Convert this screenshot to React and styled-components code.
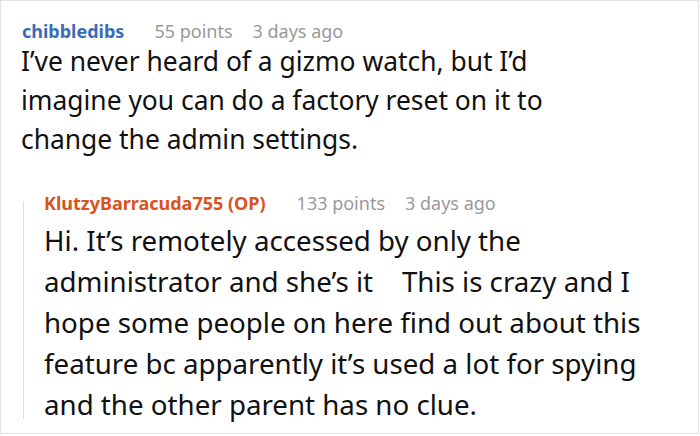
import React from 'react';
import styled, { createGlobalStyle } from 'styled-components';

const GlobalStyle = createGlobalStyle`
  body {
    margin: 0;
    background: #fff;
    font-family: 'Noto Sans', 'Open Sans', sans-serif;
  }
`;

const Frame = styled.div`
  box-sizing: border-box;
  width: 699px;
  height: 434px;
  border: 1px solid #e2e2e2;
  padding: 17px 0 0 20px;
  overflow: hidden;
`;

const Comment = styled.div`
  display: flex;
  flex-direction: column;
`;

const Meta = styled.div`
  display: flex;
  align-items: baseline;
  gap: 20px;
  height: ${({ h }) => h}px;
  padding-left: ${({ indent }) => indent || 0}px;
  font-size: 18px;
  line-height: 26px;
`;

const Author = styled.span`
  font-weight: 700;
  color: ${({ op }) => (op ? '#d9531e' : '#3b6cb7')};
  margin-right: ${({ op }) => (op ? 11 : 10)}px;
`;

const Info = styled.span`
  color: #999;
`;

const Body = styled.p`
  margin: 0;
  font-size: ${({ size }) => size}px;
  line-height: ${({ lh }) => lh}px;
  color: #111;
  white-space: nowrap;
`;

const Reply = styled.div`
  position: relative;
  margin: 31px 0 0 2px;
  padding: 0 0 0 21px;
  display: flex;
  flex-direction: column;

  &::before {
    content: '';
    position: absolute;
    left: 0;
    top: 11px;
    bottom: 6px;
    width: 1px;
    background: #dcdcdc;
  }
`;

export default function App() {
  return (
    <>
      <GlobalStyle />
      <Frame>
        <Comment>
          <Meta h={24} indent={1}>
            <Author>chibbledibs</Author>
            <Info>55 points</Info>
            <Info>3 days ago</Info>
          </Meta>
          <Body size={26.4} lh={39}>
            I’ve never heard of a gizmo watch, but I’d<br />
            imagine you can do a factory reset on it to<br />
            change the admin settings.
          </Body>
        </Comment>
        <Reply>
          <Meta h={30}>
            <Author op>KlutzyBarracuda755 (OP)</Author>
            <Info>133 points</Info>
            <Info>3 days ago</Info>
          </Meta>
          <Body size={27.7} lh={41}>
            Hi. It’s remotely accessed by only the<br />
            administrator and she’s it &nbsp;&nbsp; This is crazy and I<br />
            hope some people on here find out about this<br />
            feature bc apparently it’s used a lot for spying<br />
            and the other parent has no clue.
          </Body>
        </Reply>
      </Frame>
    </>
  );
}
